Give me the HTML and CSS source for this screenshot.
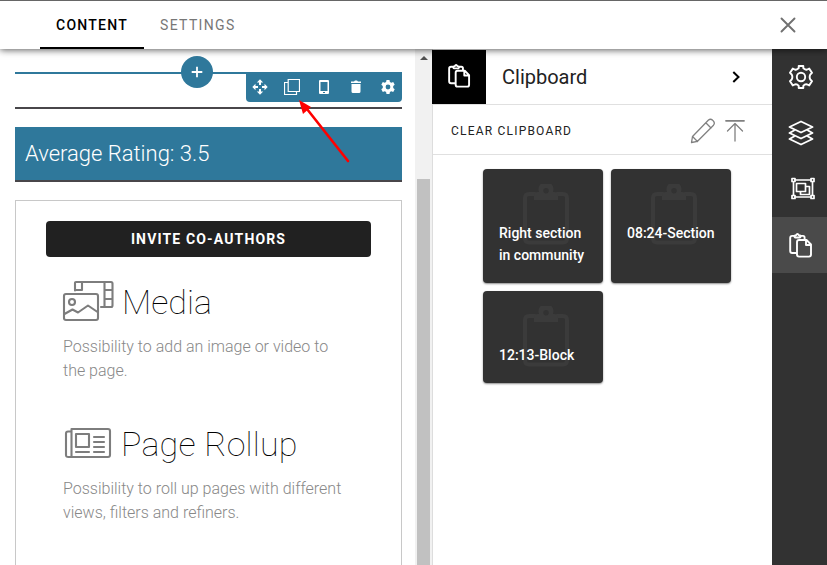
FILE: index.html
```html
<!DOCTYPE html>
<html lang="en">
<head>
<meta charset="utf-8">
<title>Page editor</title>
<link rel="stylesheet" href="styles.css">
</head>
<body>
<svg class="defs" width="0" height="0">
  <symbol id="paste" viewBox="0 0 24 26"><path d="M8 20H3.200Q1.200 20 1.200 18V4.900Q1.200 2.900 3.200 2.900H5L6 4.500H11L12 2.900H14Q15.600 2.900 15.600 4.700V6M5.500 3Q6 2.200 7 2.200Q8.400-.2 9.900 2.200Q11 2.200 11.700 3M8 9Q8 7 10 7H17.500L22 11.500V21.500Q22 23.600 20 23.600H10Q8 23.600 8 21.500ZM17 7.400V12H22"/></symbol>
  <symbol id="board" viewBox="0 0 46 62"><path d="M12 10H6Q2 10 2 14V54Q2 58.500 6 58.500H40Q44 58.500 44 54V14Q44 10 40 10H34"/><path class="clip" fill-rule="evenodd" d="M15 8H16A7.500 7.500 0 1 1 30 8H31Q35 8 35 12V16H11V12Q11 8 15 8ZM23 4A2.700 2.700 0 1 0 23 9.400A2.700 2.700 0 1 0 23 4Z"/></symbol>
</svg>
<header class="topbar">
  <nav class="tabs"><a class="tab active">CONTENT</a><a class="tab">SETTINGS</a></nav>
  <svg class="close" width="16" height="16" viewBox="0 0 16 16"><path d="M1.500 1.500L14.500 14.500M14.500 1.500L1.500 14.500"/></svg>
</header>
<main class="workspace">
  <section class="canvas">
    <div class="section-slot">
      <button class="add" aria-label="Add"><svg width="12" height="12" viewBox="0 0 12 12"><path d="M6 .7V11.300M.7 6H11.300"/></svg></button>
      <div class="tools">
        <svg width="16" height="16" viewBox="0 0 16 16"><path d="M8 .3L11.200 3.500H9V6H7V3.500H4.800ZM8 15.700L4.800 12.500H7V10H9V12.500H11.200ZM.3 8L3.500 4.800V7H6V9H3.500V11.200ZM15.700 8L12.500 11.200V9H10V7H12.500V4.800Z"/></svg>
        <svg class="line" width="16" height="16" viewBox="0 0 16 16"><path d="M4.200.5H15.500V12.500H4.200ZM4.200 3.500H.5V15.500H12.500V12.500"/></svg>
        <svg width="16" height="16" viewBox="0 0 16 16"><path fill-rule="evenodd" d="M4 1H12Q13 1 13 2V14Q13 15 12 15H4Q3 15 3 14V2Q3 1 4 1ZM4.500 3V12H11.500V3ZM7 13H9V14H7Z"/></svg>
        <svg width="16" height="16" viewBox="0 0 16 16"><path d="M3 2.500H6L7 1.500H9L10 2.500H13V4H3ZM3.500 5H12.500V12.500Q12.500 14 11 14H5Q3.500 14 3.500 12.500Z"/></svg>
        <svg width="16" height="16" viewBox="0 0 16 16"><path fill-rule="evenodd" d="M6.500 1H9.500L9.900 3L11.300 3.800L13.200 3.100L14.700 5.700L13.200 7V9L14.700 10.300L13.200 12.900L11.300 12.200L9.900 13L9.500 15H6.500L6.100 13L4.700 12.200L2.800 12.900L1.300 10.300L2.800 9V7L1.300 5.700L2.800 3.100L4.700 3.800L6.100 3ZM8 5.600A2.400 2.400 0 1 0 8 10.400A2.400 2.400 0 1 0 8 5.600Z"/></svg>
      </div>
    </div>
    <h2 class="rating">Average Rating: 3.5</h2>
    <div class="card">
      <button class="invite">INVITE CO-AUTHORS</button>
      <article class="block">
        <div class="block-title">
          <svg class="block-icon" width="51" height="41" viewBox="0 0 51 41"><path d="M3 13H33Q35 13 35 15V37Q35 39 33 39H3Q1 39 1 37V15Q1 13 3 13M1.500 33L9.500 28.500L15 31.500L25 24.500L34.500 31M12 9.500V2Q12 1 13 1H48Q49.500 1 49.500 2.500V24.500Q49.500 26 48 26H38M12 9H19V2M41.500 2V26M41.500 9H49M41.500 18H49"/><circle cx="9" cy="21" r="3"/></svg>
          <h3>Media</h3>
        </div>
        <p>Possibility to add an image or video to the page.</p>
      </article>
      <article class="block">
        <div class="block-title rollup">
          <svg class="block-icon" width="46" height="31" viewBox="0 0 46 31"><path d="M6.500 1H43Q45 1 45 3V27Q45 29 43 29H3.500Q1 29 1 27V5.500Q1 3.500 3 3.500H6M6.500 1.500V28.500M11 6H24V19H11ZM11 24H24M29 9H39M29 14H39M29 19H39M29 24H39"/></svg>
          <h3>Page Rollup</h3>
        </div>
        <p>Possibility to roll up pages with different views, filters and refiners.</p>
      </article>
    </div>
    <svg class="pointer" width="52" height="64" viewBox="0 0 52 64"><path class="shaft" d="M8 9L49 61"/><path d="M0 0L12 7L4 14Z"/></svg>
  </section>
  <div class="scrollbar"><span class="up"></span><span class="thumb"></span></div>
  <aside class="panel">
    <div class="panel-head">
      <span class="panel-icon"><svg class="paste" width="23" height="25"><use href="#paste"/></svg></span>
      <h2>Clipboard</h2>
      <svg class="chevron" width="8" height="12" viewBox="0 0 8 12"><path d="M1.300 1L6.500 6L1.300 11"/></svg>
    </div>
    <div class="panel-actions">
      <span>CLEAR CLIPBOARD</span>
      <svg width="26" height="26" viewBox="0 0 26 26"><path d="M1.500 24.500L2.500 18.500L18.500 2Q20.500.3 22.700 2.300Q25.500 4.700 23.500 7.200L7.500 23.300ZM15.800 4.800L21 10M2.500 18.500L7.500 23.500"/></svg>
      <svg width="20" height="23" viewBox="0 0 20 23"><path class="bar" d="M1 1.800H19"/><path d="M10 22V4.500M2.500 12L10 4.500L17.500 12"/></svg>
    </div>
    <div class="clips">
      <div class="clip-card tall"><svg class="board" width="46" height="62"><use href="#board"/></svg><span>Right section<br>in community</span></div>
      <div class="clip-card tall"><svg class="board" width="46" height="62"><use href="#board"/></svg><span>08:24-Section</span></div>
      <div class="clip-card"><svg class="board" width="46" height="62"><use href="#board"/></svg><span>12:13-Block</span></div>
    </div>
  </aside>
  <nav class="rail">
    <a><svg width="24" height="24" viewBox="0 0 24 24"><path d="M9.700 1H14.300V3.200Q16 5.200 18.200 4.500L20.200 3.600L23 7.800L21.300 9.500Q20 12 21.300 14.500L23 16.200L20.200 20.400L18.200 19.500Q16 18.800 14.300 20.800V23H9.700V20.800Q8 18.800 5.800 19.500L3.800 20.400L1 16.200L2.700 14.500Q4 12 2.700 9.500L1 7.800L3.800 3.600L5.800 4.500Q8 5.200 9.700 3.200Z"/><circle cx="12" cy="12" r="4.200"/></svg></a>
    <a><svg width="26" height="26" viewBox="0 0 26 26"><path d="M13 1.500L24.500 7L13 12.500L1.500 7ZM6 10.500L1.500 13L13 18.500L24.500 13L20 10.500M6 16.500L1.500 19L13 24.500L24.500 19L20 16.500"/></svg></a>
    <a class="group"><svg width="26" height="24" viewBox="0 0 26 24"><path d="M5 3H21M5 20H21M3.500 5V18M22.500 5V18M6.500 6.500H15.500V14.500H6.500ZM16 9.500H19.500V17.500H10.500V15"/><path d="M2 1.500H5V4.500H2ZM21 1.500H24V4.500H21ZM2 18.500H5V21.500H2ZM21 18.500H24V21.500H21Z"/></svg></a>
    <a class="active"><svg class="paste" width="24" height="26"><use href="#paste"/></svg></a>
  </nav>
</main>
</body>
</html>
```

FILE: styles.css
```css
* { box-sizing: border-box; }
body { margin: 0; width: 827px; height: 565px; overflow: hidden; display: flex; flex-direction: column; background: #fff; font-family: Roboto, sans-serif; }
h2, h3, p { margin: 0; }
button { border: 0; padding: 0; font-family: inherit; }
svg { display: block; flex: none; fill: none; stroke-linejoin: round; stroke-linecap: round; }
.defs { position: absolute; }

.topbar { position: relative; z-index: 2; flex: none; height: 49px; display: flex; align-items: center; justify-content: space-between; padding: 0 31px 0 40px; border-top: 1px solid #666; background: #fff; box-shadow: 0 1px 7px rgba(0, 0, 0, .65); }
.tabs { display: flex; height: 48px; }
.tab { padding: 0 16px; line-height: 49px; font-size: 14px; font-weight: 400; letter-spacing: 1.35px; color: #777; }
.tab.active { width: 104px; color: #000; font-weight: 500; border-bottom: 2px solid #000; letter-spacing: 1.25px; }
.close { stroke: #707070; stroke-width: 1.9; }

.workspace { flex: 1; min-height: 0; display: flex; }
.canvas { position: relative; width: 415px; padding: 23px 13px 0 15px; display: flex; flex-direction: column; }
.section-slot { position: relative; flex: none; height: 37px; border-top: 2px solid #2f789b; border-bottom: 2px solid #48464a; }
.add { position: absolute; left: 166px; top: -18px; width: 32px; height: 32px; border-radius: 50%; background: #2f789b; display: flex; align-items: center; justify-content: center; }
.add svg { stroke: #fff; stroke-width: 1.8; stroke-linecap: butt; }
.tools { position: absolute; right: 0; top: -2px; width: 156px; height: 30px; padding-left: 5.500px; border-radius: 0 0 4px 4px; background: #2f789b; display: flex; align-items: center; gap: 16px; }
.tools svg { fill: #fff; }
.tools .line { fill: none; stroke: #fff; stroke-width: 1.2; stroke-linejoin: miter; }
.rating { flex: none; margin-top: 18px; height: 55px; padding-left: 10px; line-height: 53px; font-size: 22px; font-weight: 300; color: #fff; background: #2f789b; border-bottom: 2px solid #48464a; }
.card { margin-top: 18px; flex: 1; padding: 20px 30px 0; border: 1px solid #c8c8c8; border-bottom: 0; }
.invite { display: block; width: 100%; height: 36px; border-radius: 4px; background: #212121; color: #fff; font-size: 14px; font-weight: 700; letter-spacing: 1.15px; }
.block { height: 142px; padding: 21px 20px 0 17px; }
.block-title { height: 48px; display: flex; align-items: center; gap: 8px; padding-bottom: 1px; }
.block-title.rollup { gap: 10px; padding-left: 2px; }
.block-icon { stroke: #7d7d7d; stroke-width: 2.1; overflow: visible; }
.block h3 { padding-top: 1px; font-size: 34px; line-height: 48px; font-weight: 100; color: #000; }
.rollup h3 { letter-spacing: .22px; }
.block p { margin-top: 9px; font-size: 16px; line-height: 24px; font-weight: 300; color: #888; }
.pointer { position: absolute; left: 299px; top: 51px; fill: #f00; }
.pointer .shaft { stroke: #f00; stroke-width: 2.6; }

.scrollbar { width: 17px; padding: 7px 2px 0; background: #f1f1f1; display: flex; flex-direction: column; align-items: center; }
.up { border: 4px solid transparent; border-top: 0; border-bottom-color: #505050; }
.thumb { width: 13px; flex: 1; margin-top: 119px; background: #c1c1c1; }

.panel { width: 340px; border-left: 1px solid #ddd; }
.panel-head { height: 56px; display: flex; align-items: center; padding-right: 32px; border-bottom: 1px solid #e0e0e0; }
.panel-icon { width: 54px; height: 54px; margin-left: -1px; background: #000; display: flex; align-items: center; justify-content: center; }
.paste { stroke: #fff; stroke-width: 2; }
.panel-head h2 { margin-left: 16px; flex: 1; font-size: 20px; font-weight: 400; color: #222; }
.chevron { stroke: #000; stroke-width: 2; stroke-linecap: butt; stroke-linejoin: miter; }
.panel-actions { height: 50px; display: flex; align-items: center; gap: 9px; padding: 2px 27px 0 18px; border-bottom: 1px solid #e0e0e0; font-size: 12px; letter-spacing: 1.2px; color: #222; }
.panel-actions span { flex: 1; padding-top: 1px; }
.panel-actions svg { stroke: #808080; stroke-width: 1.3; }
.panel-actions .bar { stroke-width: 1.8; }
.clips { display: flex; flex-wrap: wrap; gap: 8px; padding: 14px 39px 0 50px; }
.clip-card { position: relative; width: 120px; height: 92px; padding: 53px 0 0 16px; border-radius: 4px; background: #323232; box-shadow: 0 1px 2px rgba(0, 0, 0, .45); color: #fff; font-size: 14px; font-weight: 500; line-height: 22px; }
.clip-card.tall { height: 114px; }
.clip-card span { position: relative; }
.board { position: absolute; left: 39.500px; top: 14.500px; stroke: #3b3b3b; stroke-width: 4; }
.clip { fill: #3b3b3b; stroke: none; }

.rail { width: 55px; background: #323232; display: flex; flex-direction: column; }
.rail a { height: 56px; display: flex; align-items: center; justify-content: center; padding-left: 3px; }
.rail a.group { padding-left: 6px; }
.rail a.active { padding-top: 1px; background: #4a4a4a; }
.rail svg { stroke: #fff; stroke-width: 1.9; }
.rail .group svg { stroke-width: 1.7; }
```
